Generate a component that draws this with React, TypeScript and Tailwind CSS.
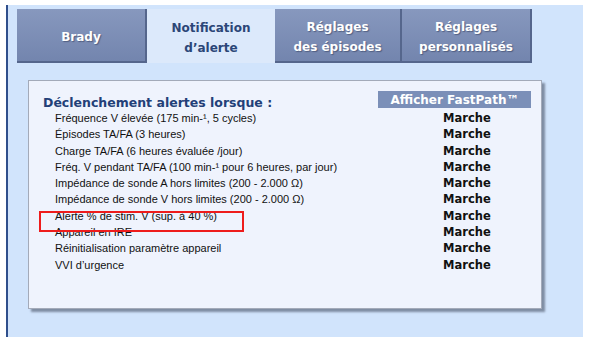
const tabs = [
  { label: ["Brady"], active: false, w: "w-[130px]" },
  { label: ["Notification", "d’alerte"], active: true, w: "w-[128px]" },
  { label: ["Réglages", "des épisodes"], active: false, w: "w-[127px]" },
  { label: ["Réglages", "personnalisés"], active: false, w: "w-[130px]" },
];

const alerts = [
  "Fréquence V élevée (175 min-¹, 5 cycles)",
  "Épisodes TA/FA (3 heures)",
  "Charge TA/FA (6 heures évaluée /jour)",
  "Fréq. V pendant TA/FA (100 min-¹ pour 6 heures, par jour)",
  "Impédance de sonde A hors limites (200 - 2.000 Ω)",
  "Impédance de sonde V hors limites (200 - 2.000 Ω)",
  "Alerte % de stim. V (sup. à 40 %)",
  "Appareil en IRE",
  "Réinitialisation paramètre appareil",
  "VVI d’urgence",
];

const Tab = ({ label, active, w }: { label: string[]; active: boolean; w: string }) => (
  <div
    className={`${w} h-[54px] pt-[3px] flex flex-col items-center justify-center text-[12px] font-bold leading-[20px] ${
      active
        ? "bg-[#dce9fb] text-[#2b4677]"
        : "bg-gradient-to-b from-[#8798be] to-[#7385ae] text-white border-r-2 border-b-2 border-[#55668c] [text-shadow:1px_1px_1px_rgba(40,50,80,0.5)]"
    }`}
    style={{ fontFamily: '"DejaVu Sans", Verdana, sans-serif' }}
  >
    {label.map((l) => (
      <span key={l}>{l}</span>
    ))}
  </div>
);

export default function App() {
  return (
    <div className="w-[589px] h-[344px] bg-white pt-[5px] pl-[6px]">
      <div className="w-[577px] h-[332px] bg-[#d1e4fc] border-l-2 border-[#2f4f8c]">
        <div className="flex pt-[4px] pl-[9px]">
          {tabs.map((t) => (
            <Tab key={t.label.join()} {...t} />
          ))}
        </div>
        <div className="relative ml-[20px] mt-[17px] w-[514px] h-[229px] bg-[#eff3fd] border border-[#a3aab9] shadow-[3px_3px_2px_rgba(60,70,90,0.55)] pt-[10px]">
          <div className="flex items-start justify-between pl-[14px] pr-[10px]">
            <span
              className="pt-[5px] text-[12.5px] font-bold leading-[14px] text-[#233f78]"
              style={{ fontFamily: '"DejaVu Sans", Verdana, sans-serif' }}
            >
              Déclenchement alertes lorsque :
            </span>
            <div
              className="w-[153px] h-[17px] bg-[#7b8fb8] text-white text-[12px] font-bold flex items-center justify-center"
              style={{ fontFamily: '"DejaVu Sans", Verdana, sans-serif' }}
            >
              Afficher FastPath™
            </div>
          </div>
          <div className="pl-[26px]">
            {alerts.map((a) => (
              <div key={a} className="flex leading-[16.3px]">
                <span
                  className="w-[388px] text-[11px] text-[#111]"
                  style={{ fontFamily: '"Liberation Sans", Arial, sans-serif' }}
                >
                  {a}
                </span>
                <span
                  className="text-[11.5px] font-bold text-[#111]"
                  style={{ fontFamily: '"DejaVu Sans", Verdana, sans-serif' }}
                >
                  Marche
                </span>
              </div>
            ))}
          </div>
          <div className="absolute left-[10px] top-[130px] w-[205px] h-[21px] border-[2.5px] border-[#ee1c1c]" />
        </div>
      </div>
    </div>
  );
}
